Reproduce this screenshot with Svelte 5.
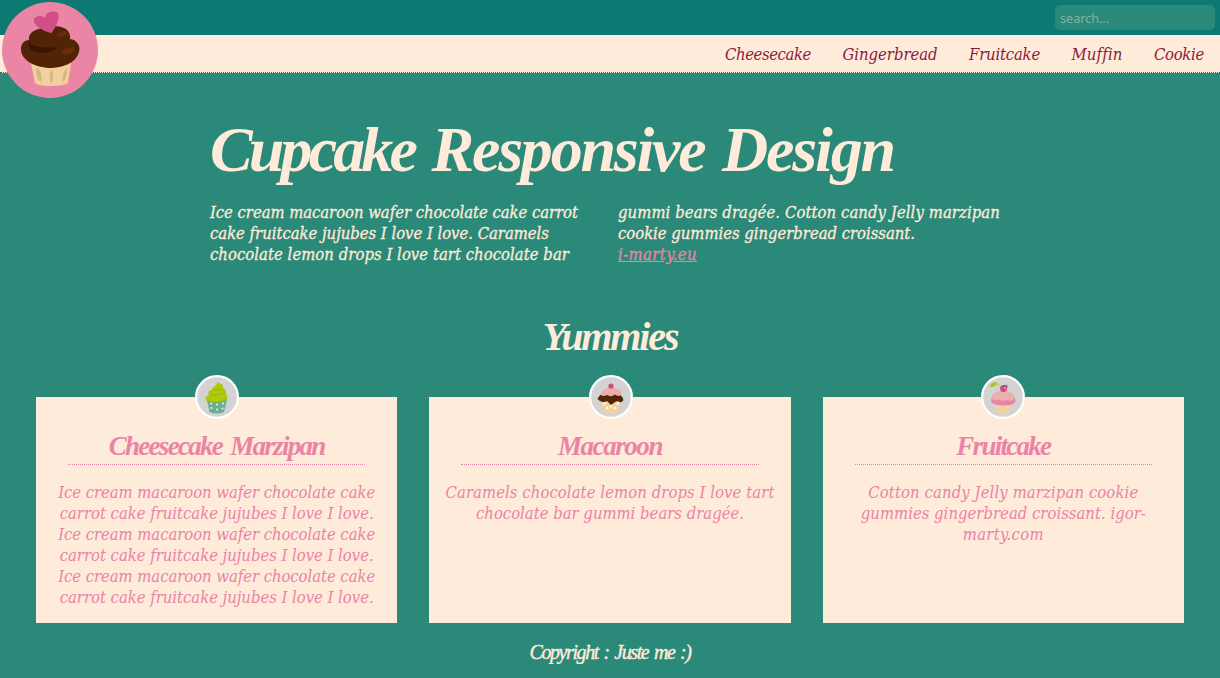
<script>
  const nav = [['Cheesecake', 86], ['Gingerbread', 95], ['Fruitcake', 71], ['Muffin', 51], ['Cookie', 50]];
  const headline = [['Cupcake', 204], ['Responsive', 273], ['Design', 172]];
  const left = [
    ['Ice cream macaroon wafer chocolate cake carrot', 368],
    ['cake fruitcake jujubes I love I love. Caramels', 339],
    ['chocolate lemon drops I love tart chocolate bar', 359]
  ];
  const right = [
    ['gummi bears dragée. Cotton candy Jelly marzipan', 382],
    ['cookie gummies gingerbread croissant.', 297]
  ];
  const ice = [
    ['Ice cream macaroon wafer chocolate cake', 317],
    ['carrot cake fruitcake jujubes I love I love.', 314]
  ];
  const cards = [
    { icon: 'green', title: 'Cheesecake Marzipan', width: 216, lines: [...ice, ...ice, ...ice] },
    {
      icon: 'choco', title: 'Macaroon', width: 104,
      lines: [['Caramels chocolate lemon drops I love tart', 329], ['chocolate bar gummi bears dragée.', 268]]
    },
    {
      icon: 'pink', title: 'Fruitcake', width: 94,
      lines: [['Cotton candy Jelly marzipan cookie', 270], ['gummies gingerbread croissant. igor-', 285], ['marty.com', 81]]
    }
  ];

  // Tracks a line of text so that it sets to the given measure.
  function fit(node, width) {
    node.style.letterSpacing = '0.001px';
    const natural = node.getBoundingClientRect().width;
    const gap = (width - natural) / node.textContent.length;
    node.style.letterSpacing = `${gap}px`;
  }
</script>

<div class="top"><input class="search" placeholder="search..." /></div>
<nav>
  {#each nav as [label, width]}<a href="#top"><span use:fit={width}>{label}</span></a>{/each}
</nav>
<svg class="logo" viewBox="0 0 96 96">
  <circle cx="48" cy="48" r="48" fill="#ea85a6" />
  <path d="M29 61 L33 81 Q36 84 48 84 Q62 84 66 81 L69 61Z" fill="#f0d09c" />
  <g fill="#d9b483">
    <path d="M35 66c-2 3 0 12 4 14 1-2 1-12-4-14zM49.500 67c-2 4-2 11 0 15 2-4 2-11 0-15zM65 66c-4 4-5 10-4 14 3-3 5-11 4-14z" />
  </g>
  <path d="M27 38C26 28 38 26 48 25C59 22 70 28 68 37C75 38 79 44 77 50C74 61 61 66 47 66C32 65 19 58 19 47C19 41 23 38 27 38Z" fill="#502404" />
  <path d="M27 38Q29 44 38 45Q47 46 56 45Q50 51 38 51Q24 49 27 38Z" fill="#3b1404" />
  <ellipse cx="60" cy="32" rx="5" ry="3" transform="rotate(-17 60 32)" fill="#672b0d" />
  <ellipse cx="66.500" cy="49" rx="7" ry="3.500" transform="rotate(-20 66.500 49)" fill="#672b0d" />
  <path d="M49.500 31C43 30 34 25 32 20C31 14 39 12 43 16C43 10 52 8 56 11C58 17 54 25 49.500 31Z" fill="#d24e86" />
</svg>

<main>
  <header>
    <h1>{#each headline as [word, width]}<span use:fit={width}>{word}</span>{/each}</h1>
    <div class="intro">
      <div>
        {#each left as [text, width]}<p><span use:fit={width}>{text}</span></p>{/each}
      </div>
      <div>
        {#each right as [text, width]}<p><span use:fit={width}>{text}</span></p>{/each}
        <p><a class="link" href="#site" use:fit={79}>i-marty.eu</a></p>
      </div>
    </div>
  </header>

  <h2><span use:fit={135}>Yummies</span></h2>
  <section class="cards">
    {#each cards as card}
      <article>
        <svg class="badge {card.icon}" viewBox="0 0 44 44">
          <circle cx="22" cy="22" r="20.900" fill="#d3d3d3" stroke="#fff" stroke-width="2.200" />
          {#if card.icon === 'green'}
            <path d="M12 25L14.500 37Q22 40 29 37L32 25Z" fill="#6cae99" />
            <g fill="#fff3c9"><circle cx="16" cy="28.500" r="1" /><circle cx="22" cy="29.500" r="1" /><circle cx="28" cy="28.500" r="1" /><circle cx="16.500" cy="33" r="1" /><circle cx="22" cy="34.500" r="1" /><circle cx="27.500" cy="33.500" r="1" /></g>
            <path d="M22 6C23 9 28 8 28 11C27 14 31 13 31 17C30 20 33 20 32.500 23C32 28 11 29 10.500 24C10 21 13 21 14 20C12 17 14 15 17 15C16 11 23 12 22 6Z" fill="#afc90d" />
            <path d="M18 15Q25 16 28 12M15 20Q26 21 31 17M12 26Q23 29 32 24" fill="none" stroke="#98b206" stroke-width=".8" />
          {:else if card.icon === 'choco'}
            <path d="M11 24L14 37Q22 40 29 37L32 24Z" fill="#f1d29e" />
            <g fill="#fff8ea"><circle cx="15" cy="28.500" r="1.500" /><circle cx="22" cy="31" r="1.500" /><circle cx="29" cy="28.500" r="1.500" /><circle cx="18" cy="33" r="1.500" /><circle cx="26" cy="33" r="1.500" /></g>
            <path d="M8.500 24Q10 18 22 17Q33 18 34.500 25Q32 29 29 26L26 27L22 30L18 26Q13 29 8.500 24Z" fill="#522504" />
            <path d="M12 20C12 15 17 12.500 22 12.500C28 12.500 33 15 32 20Q29 22 26 19.500Q22 22.500 18 20Q14 22 12 20Z" fill="#edabae" />
            <circle cx="22" cy="11" r="2.600" fill="#d14e83" />
          {:else}
            <path d="M14 27H30L28.500 37.500Q22 39.500 16 37.500Z" fill="#f0d19f" />
            <path d="M10 26C10.500 20 15 16 22 16C29 16 34 20 34.500 26Q34 30.500 22 30.500Q10.500 30 10 26Z" fill="#ea84a6" />
            <path d="M11 23.500C12 18 17 15.500 22 15.500C28 15.500 33 18 33.500 23.500Q29 27.500 26 24.500Q22 27 18 24.500Q14 27 11 23.500Z" fill="#edafae" />
            <circle cx="22.500" cy="13.500" r="3.500" fill="#d04d83" /><path d="M22 12Q22 9.500 26 10.500V13" fill="none" stroke="#943b54" stroke-width=".8" /><circle cx="24" cy="13" r="1" fill="#ed9ab7" />
            <path d="M9 12Q9 7 16 7Q16 12 9 12" fill="#a9c71c" /><path d="M15.500 9Q18 9 20 11.500" fill="none" stroke="#a9c71c" stroke-width=".7" />
          {/if}
        </svg>
        <h3><span use:fit={card.width}>{card.title}</span></h3>
        <div class="copy">
          {#each card.lines as [text, width]}<p><span use:fit={width}>{text}</span></p>{/each}
        </div>
      </article>
    {/each}
  </section>
</main>
<footer><span use:fit={161}>Copyright : Juste me :)</span></footer>

<style>
  :global(body) {
    margin: 0;
    background: #2a8978;
    overflow: hidden;
    color: #ffebd9;
    font: italic 16.500px/21px "DejaVu Serif Condensed", "DejaVu Serif", serif;
    font-stretch: condensed;
    font-variant-ligatures: none;
  }
  span, .link { display: inline-block; white-space: nowrap; }
  .top {
    box-sizing: border-box;
    height: 35px;
    padding: 5px;
    display: flex;
    justify-content: flex-end;
    background: #0c7a73;
  }
  .search {
    box-sizing: border-box;
    width: 160px;
    height: 25px;
    padding: 1px 5px 0;
    border: 0;
    border-radius: 5px;
    background: #2a8978;
    font: 12.600px "Noto Sans", sans-serif;
  }
  .search::placeholder { color: #82b3a2; opacity: 1; }
  nav {
    box-sizing: border-box;
    height: 38px;
    padding-right: 16px;
    display: flex;
    justify-content: flex-end;
    align-items: center;
    gap: 31.500px;
    background: #ffebd9;
    border-bottom: 1px dotted #2a7468;
  }
  nav a { color: #8c1a3e; text-decoration: none; padding-top: 2px; }
  .logo { position: absolute; left: 2px; top: 2px; width: 96px; height: 96px; }
  header { width: 800px; margin: 0 auto; padding-top: 39px; }
  h1, h2, h3, p { margin: 0; }
  h1, h2, h3, footer { font-family: "Liberation Serif", serif; font-style: italic; }
  h1 { display: flex; gap: 17.500px; font-size: 64px; line-height: 76px; height: 90px; }
  .intro { display: grid; grid-template-columns: 384px 384px; gap: 24px; -webkit-text-stroke: .3px; }
  p { height: 21px; }
  .link { color: #ea83a6; text-decoration: underline; }
  h2 { font-size: 40px; line-height: 48px; text-align: center; padding-top: 48px; height: 84px; }
  .cards { display: grid; grid-template-columns: repeat(3, 1fr); gap: 32px; padding: 0 36px; }
  article { position: relative; height: 226px; background: #ffebd9; color: #ea83a6; text-align: center; }
  .badge { position: absolute; left: calc(50% - 22px); top: -22px; width: 44px; height: 44px; }
  .badge.choco { left: calc(50% - 21.400px); }
  h3 { margin: 32px 32px 0; height: 35px; font-size: 27px; line-height: 34px; border-bottom: 1px dotted #ea83a6; }
  h3 span { word-spacing: 3px; }
  .copy { padding-top: 17px; }
  footer { text-align: center; font-size: 20px; line-height: 24px; padding-top: 17px; -webkit-text-stroke: .4px; }
  footer span { word-spacing: 2px; }
</style>
